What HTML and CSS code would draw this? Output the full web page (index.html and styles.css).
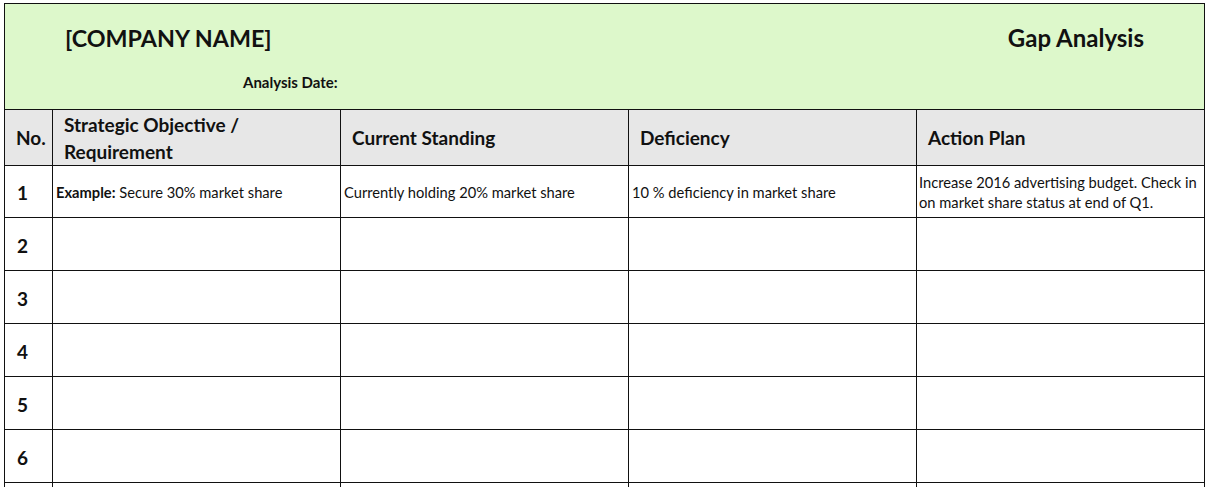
FILE: index.html
```html
<!DOCTYPE html>
<html lang="en">
<head>
<meta charset="utf-8">
<title>Gap Analysis</title>
<link rel="stylesheet" href="styles.css">
</head>
<body>
<div class="sheet">
  <div class="banner">
    <div class="banner-top">
      <span class="company">[COMPANY NAME]</span>
      <span class="doc-title">Gap Analysis</span>
    </div>
    <div class="analysis-date">Analysis Date:</div>
  </div>

  <div class="cell head no">No.</div>
  <div class="cell head">Strategic Objective /<br>Requirement</div>
  <div class="cell head">Current Standing</div>
  <div class="cell head">Deficiency</div>
  <div class="cell head">Action Plan</div>

  <div class="cell num">1</div>
  <div class="cell data"><span><b>Example:</b> Secure 30% market share</span></div>
  <div class="cell data">Currently holding 20% market share</div>
  <div class="cell data">10 % deficiency in market share</div>
  <div class="cell data plan">Increase 2016 advertising budget. Check in on market share status at end of Q1.</div>

  <div class="cell num">2</div><div class="cell"></div><div class="cell"></div><div class="cell"></div><div class="cell"></div>
  <div class="cell num">3</div><div class="cell"></div><div class="cell"></div><div class="cell"></div><div class="cell"></div>
  <div class="cell num">4</div><div class="cell"></div><div class="cell"></div><div class="cell"></div><div class="cell"></div>
  <div class="cell num">5</div><div class="cell"></div><div class="cell"></div><div class="cell"></div><div class="cell"></div>
  <div class="cell num">6</div><div class="cell"></div><div class="cell"></div><div class="cell"></div><div class="cell"></div>
  <div class="cell num"></div><div class="cell"></div><div class="cell"></div><div class="cell"></div><div class="cell"></div>
</div>
</body>
</html>
```

FILE: styles.css
```css
html, body {
  margin: 0;
  padding: 0;
  background: #fff;
}

body {
  font-family: Lato, "Open Sans", "Liberation Sans", sans-serif;
  color: #111;
  overflow: hidden;
  height: 487px;
}

.sheet {
  margin: 3px 0 0 4px;
  width: 1201px;
  box-sizing: border-box;
  padding: 1px;
  background: #111;
  display: grid;
  grid-template-columns: 47px repeat(4, 287px);
  grid-template-rows: 105px 55px 51px repeat(6, 52px);
  gap: 1px;
}

.banner {
  grid-column: 1 / -1;
  background: #ddf8cb;
  padding: 21px 60px 0 60px;
  box-sizing: border-box;
}

.banner-top {
  display: flex;
  justify-content: space-between;
  align-items: baseline;
  line-height: 26px;
}

.company {
  font-size: 23.3px;
  font-weight: 700;
}

.doc-title {
  font-size: 24px;
  font-weight: 700;
}

.analysis-date {
  margin: 22px 0 0 178px;
  font-size: 15px;
  font-weight: 700;
  line-height: 18px;
}

.cell {
  background: #fff;
  display: flex;
  align-items: center;
  box-sizing: border-box;
}

.head {
  background: #e7e7e7;
  font-size: 19px;
  font-weight: 700;
  line-height: 27px;
  padding: 0 11px;
}

.num {
  font-size: 19px;
  font-weight: 700;
  padding: 2px 0 0 12px;
}

.data {
  font-size: 14.7px;
  line-height: 20px;
  padding: 1px 2px 0 3px;
}

.data b {
  font-weight: 700;
}

.plan {
  padding-left: 2px;
}
```
